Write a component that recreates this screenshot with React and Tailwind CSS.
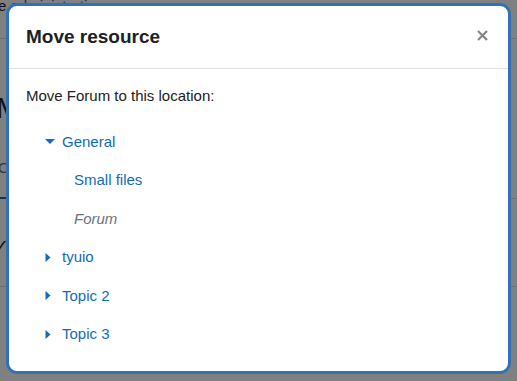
import React from 'react';

const items = [
    { label: 'General', open: true, depth: 0 },
    { label: 'Small files', depth: 1 },
    { label: 'Forum', depth: 1, current: true },
    { label: 'tyuio', depth: 0 },
    { label: 'Topic 2', depth: 0 },
    { label: 'Topic 3', depth: 0 },
];

const Caret = ({ open }) =>
    open ? (
        <svg width="10" height="5" viewBox="0 0 10 5" className="shrink-0">
            <path d="M0 0h10L5 5z" fill="#0f6cbf" />
        </svg>
    ) : (
        <svg width="6" height="9" viewBox="0 0 6 9" className="shrink-0">
            <path d="M0.5 0v9L5.5 4.5z" fill="#0f6cbf" />
        </svg>
    );

const App = () => {
    return (
        <div className="relative w-[517px] h-[381px] overflow-hidden bg-[#808080] font-['Liberation_Sans',Arial,sans-serif]">
            {/* page behind the backdrop */}
            <div className="flex flex-col">
                <div className="h-[39px] border-b border-[#6e6f70] text-[15px] leading-[12px] -ml-[2px] text-[#0f1113] whitespace-nowrap">
                    e <span className="text-[#07365f]">administration</span>
                </div>
                <div className="h-[112px] pt-[52px] -ml-[4px] text-[30px] leading-[34px] text-[#0f1113]">M</div>
                <div className="h-[46px] text-[15px] leading-[20px] text-[#34373a] -ml-[2px] pt-[7px]">C</div>
                <div className="flex h-[2px]">
                    <div className="w-[40px] bg-[#07365f]" />
                    <div className="flex-1 mt-[1px] bg-[#6e6f70]" />
                </div>
                <div className="h-[88px] border-b border-[#6e6f70] pt-[38px] -ml-[6px] text-[18px] leading-[18px] text-[#0f1113]">✓</div>
            </div>

            {/* modal */}
            <div className="absolute left-[6px] top-[3px] w-[505px] h-[371px] rounded-[11px] border-[3px] border-[#3271b6] bg-white flex flex-col">
                <div className="h-[63px] shrink-0 flex items-start justify-between pl-[17px] pr-[20px] pt-[19px] border-b border-[#dee2e6] rounded-t-[8px]">
                    <h5 className="text-[19px] font-bold text-[#1d2125] leading-[23px]">Move resource</h5>
                    <svg width="11" height="11" viewBox="0 0 11 11" className="mt-[5px]">
                        <path d="M1 1l9 9M10 1l-9 9" stroke="#848789" strokeWidth="2.2" />
                    </svg>
                </div>
                <div className="pt-[16px] px-[17px]">
                    <p className="text-[15px] leading-[22.5px] text-[#1d2125] mb-[15px]">Move Forum to this location:</p>
                    <ul className="flex flex-col">
                        {items.map((it) => (
                            <li
                                key={it.label}
                                className={`flex items-center py-2 text-[15px] leading-[22.5px] ${it.depth ? 'pl-[48px]' : 'pl-[19px]'}`}
                            >
                                {!it.depth && (
                                    <span className="w-[17px] flex items-center">
                                        <Caret open={it.open} />
                                    </span>
                                )}
                                {it.current ? (
                                    <span className="italic text-[#6a737b]">{it.label}</span>
                                ) : (
                                    <span className="text-[#0f6cbf]">{it.label}</span>
                                )}
                            </li>
                        ))}
                    </ul>
                </div>
            </div>
        </div>
    );
};

export default App;
